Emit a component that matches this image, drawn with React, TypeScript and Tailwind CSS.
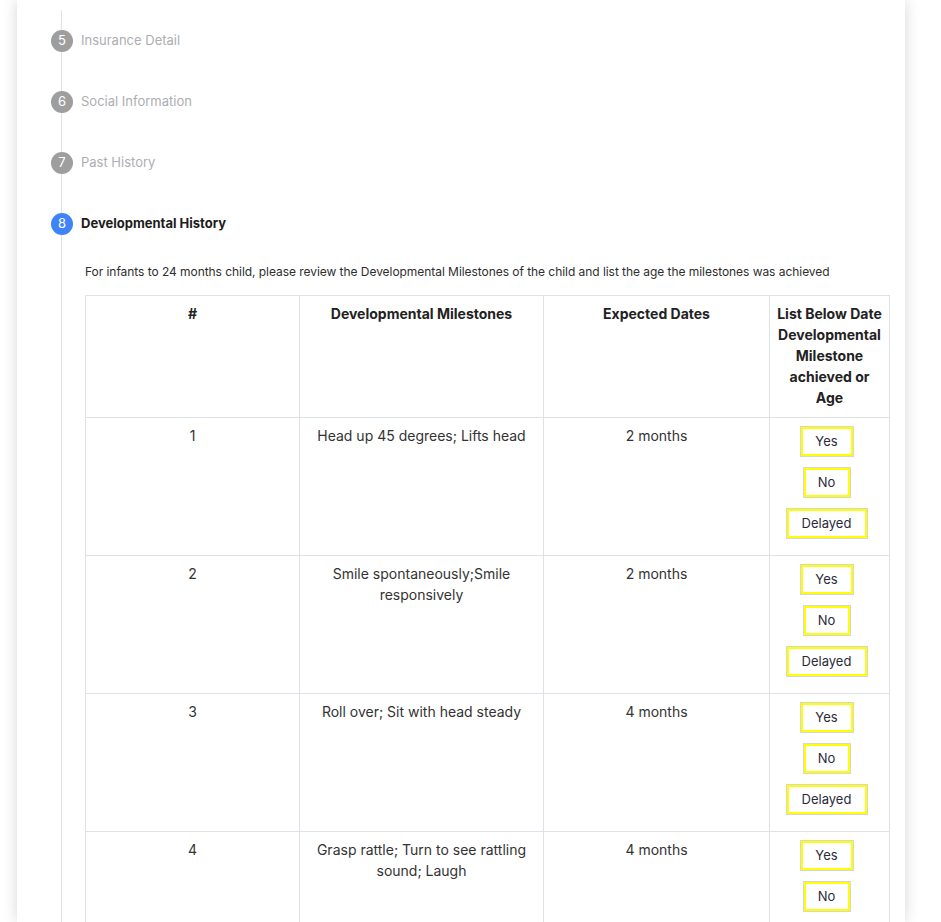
import React from "react";

const font = { fontFamily: "Inter, 'Noto Sans', sans-serif" };

type Row = { n: number; m: React.ReactNode; d: string; opts: string[] };

const rows: Row[] = [
  { n: 1, m: "Head up 45 degrees; Lifts head", d: "2 months", opts: ["Yes", "No", "Delayed"] },
  { n: 2, m: <>Smile spontaneously;Smile<br />responsively</>, d: "2 months", opts: ["Yes", "No", "Delayed"] },
  { n: 3, m: "Roll over; Sit with head steady", d: "4 months", opts: ["Yes", "No", "Delayed"] },
  { n: 4, m: <>Grasp rattle; Turn to see rattling<br />sound; Laugh</>, d: "4 months", opts: ["Yes", "No", "Delayed"] },
];

function Opt({ label }: { label: string }) {
  const w = label === "Yes" ? "w-[52px]" : label === "No" ? "w-[46px]" : "w-[80px]";
  return (
    <button
      type="button"
      className={`${w} h-[29px] border-2 border-[#ffff00] ring-1 ring-[#d6d6d6] bg-white text-[13px] text-[#2b2b3a] flex items-center justify-center`}
    >
      {label}
    </button>
  );
}

function Step({ n, label, active }: { n: number; label: string; active?: boolean }) {
  return (
    <div className="flex items-center h-[61px]">
      <div
        className={`-ml-[11px] w-[22px] h-[22px] rounded-full flex items-center justify-center text-white text-[13px] ${
          active ? "bg-[#3f83f8]" : "bg-[#9e9e9e]"
        }`}
      >
        {n}
      </div>
      <div
        className={`ml-[8px] text-[13px] ${
          active ? "font-bold text-[#1c1c1c]" : "text-[#adadb3]"
        }`}
      >
        {label}
      </div>
    </div>
  );
}

export default function App() {
  return (
    <div className="w-[941px] h-[922px] overflow-hidden bg-white" style={font}>
      <div className="ml-[17px] w-[888px] h-[922px] bg-white shadow-[0_0_14px_rgba(0,0,0,0.16)] pt-[10px]">
        <div className="ml-[44px] border-l border-[#e2e2e2] h-full">
          <Step n={5} label="Insurance Detail" />
          <Step n={6} label="Social Information" />
          <Step n={7} label="Past History" />
          <Step n={8} label="Developmental History" active />
          <div className="pl-[23px] pr-[16px] pt-[9px]">
            <p className="text-[12px] tracking-[-0.05px] leading-[18px] text-[#2e2e2e] mb-[14px]">
              For infants to 24 months child, please review the Developmental Milestones of the child and list the age the milestones was achieved
            </p>
            <table className="w-[804px] table-fixed border-collapse text-[14px] leading-[21px] text-[#333]">
              <colgroup>
                <col className="w-[214px]" />
                <col className="w-[244px]" />
                <col className="w-[226px]" />
                <col className="w-[120px]" />
              </colgroup>
              <thead>
                <tr>
                  <th className="border border-[#dee2e6] align-top text-center pt-[7px] pb-[9px] font-bold text-[#222]">#</th>
                  <th className="border border-[#dee2e6] align-top text-center pt-[7px] pb-[9px] font-bold text-[#222]">Developmental Milestones</th>
                  <th className="border border-[#dee2e6] align-top text-center pt-[7px] pb-[9px] font-bold text-[#222]">Expected Dates</th>
                  <th className="border border-[#dee2e6] align-top text-center pt-[7px] pb-[9px] px-0 font-bold text-[#222]">
                    List Below Date
                    <br />
                    Developmental
                    <br />
                    Milestone
                    <br />
                    achieved or
                    <br />
                    Age
                  </th>
                </tr>
              </thead>
              <tbody>
                {rows.map((r) => (
                  <tr key={r.n}>
                    <td className="border border-[#dee2e6] align-top text-center pt-[7px] px-2">{r.n}</td>
                    <td className="border border-[#dee2e6] align-top text-center pt-[7px] px-2">{r.m}</td>
                    <td className="border border-[#dee2e6] align-top text-center pt-[7px] px-2">{r.d}</td>
                    <td className="border border-[#dee2e6] align-top pt-[9px] pb-[17px] pr-[6px]">
                      <div className="flex flex-col items-center gap-3">
                        {r.opts.map((o) => (
                          <Opt key={o} label={o} />
                        ))}
                      </div>
                    </td>
                  </tr>
                ))}
              </tbody>
            </table>
          </div>
        </div>
      </div>
    </div>
  );
}
